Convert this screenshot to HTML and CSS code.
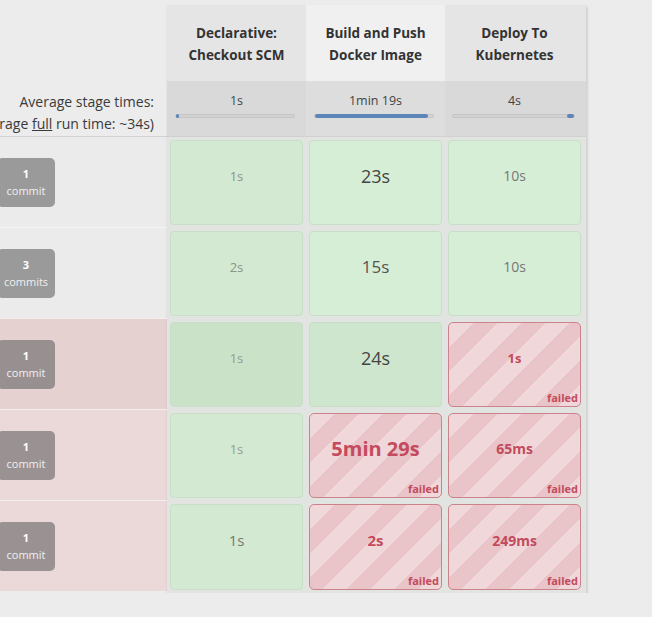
FILE: index.html
```html
<!DOCTYPE html>
<html>
<head>
<meta charset="utf-8">
<link rel="stylesheet" href="styles.css">
</head>
<body>
<div class="view">
  <div class="left">
    <div class="l-head"></div>
    <div class="l-avg">
      <div>Average stage times:</div>
      <div>(Average <u>full</u> run time: ~34s)</div>
    </div>
    <div class="l-row first"><div class="badge"><b>1</b><span>commit</span></div></div>
    <div class="l-row"><div class="badge"><b>3</b><span>commits</span></div></div>
    <div class="l-row fail hover"><div class="badge"><b>1</b><span>commit</span></div></div>
    <div class="l-row fail"><div class="badge"><b>1</b><span>commit</span></div></div>
    <div class="l-row fail"><div class="badge"><b>1</b><span>commit</span></div></div>
  </div>
  <div class="stages">
    <div class="s-row head">
      <div class="hcell">Declarative:<br>Checkout SCM</div>
      <div class="hcell lit">Build and Push<br>Docker Image</div>
      <div class="hcell">Deploy To<br>Kubernetes</div>
    </div>
    <div class="s-row avg">
      <div class="acell"><div class="atime">1s</div><div class="track"><div class="fill f1"></div></div></div>
      <div class="acell lit"><div class="atime">1min 19s</div><div class="track"><div class="fill f2"></div></div></div>
      <div class="acell"><div class="atime">4s</div><div class="track end"><div class="fill f3"></div></div></div>
    </div>
    <div class="s-row data first">
      <div class="col"><div class="cell ok"><span class="t13 c8">1s</span></div></div>
      <div class="col"><div class="cell ok lt"><span class="t18 c4">23s</span></div></div>
      <div class="col"><div class="cell ok lt"><span class="t14 c7">10s</span></div></div>
    </div>
    <div class="s-row data">
      <div class="col"><div class="cell ok"><span class="t13 c8">2s</span></div></div>
      <div class="col"><div class="cell ok lt"><span class="t16 c5">15s</span></div></div>
      <div class="col"><div class="cell ok lt"><span class="t14 c7">10s</span></div></div>
    </div>
    <div class="s-row data">
      <div class="col"><div class="cell ok dk"><span class="t13 c9">1s</span></div></div>
      <div class="col"><div class="cell ok md"><span class="t18 c4">24s</span></div></div>
      <div class="col"><div class="cell bad"><span class="t13">1s</span><i>failed</i></div></div>
    </div>
    <div class="s-row data">
      <div class="col"><div class="cell ok"><span class="t13 c9">1s</span></div></div>
      <div class="col"><div class="cell bad"><span class="t20">5min 29s</span><i>failed</i></div></div>
      <div class="col"><div class="cell bad"><span class="t14">65ms</span><i>failed</i></div></div>
    </div>
    <div class="s-row data last">
      <div class="col"><div class="cell ok"><span class="t15 c7">1s</span></div></div>
      <div class="col"><div class="cell bad"><span class="t15">2s</span><i>failed</i></div></div>
      <div class="col"><div class="cell bad"><span class="t14">249ms</span><i>failed</i></div></div>
    </div>
  </div>
</div>
</body>
</html>
```

FILE: styles.css
```css
html, body {
  margin: 0;
  padding: 0;
  background: #ececec;
  font-family: "Open Sans", "Noto Sans", sans-serif;
  color: #333;
  overflow: hidden;
}
.view {
  display: flex;
  margin-left: -84px;
  padding-top: 5px;
}
.left {
  width: 251px;
  display: flex;
  flex-direction: column;
}
.l-head {
  height: 76px;
}
.l-avg {
  height: 55px;
  box-sizing: border-box;
  padding: 10px 13px 0 0;
  text-align: right;
  font-size: 14px;
  line-height: 22px;
  color: #3a3a3a;
  white-space: nowrap;
}
.l-row {
  height: 91px;
  box-sizing: border-box;
  border-top: 1px solid #f6f6f6;
  background: #ebebeb;
  display: flex;
  align-items: center;
}
.l-row.first {
  border-top-color: #d2d2d2;
}
.l-row.fail {
  background: #ebd8d8;
  border-top-color: #f4eded;
}
.l-row.hover {
  background: #e6d1d1;
}
.badge {
  margin-left: 81px;
  width: 58px;
  height: 49px;
  border-radius: 5px;
  background: rgba(100, 100, 100, 0.6);
  color: #fff;
  display: flex;
  flex-direction: column;
  align-items: center;
  justify-content: center;
  font-size: 11px;
  line-height: 17px;
}
.badge b {
  font-weight: 700;
}
.badge span {
  color: #f0f0f0;
}
.stages {
  display: flex;
  flex-direction: column;
  background: #e1e4e0;
  box-shadow: 1px 2px 3px rgba(0, 0, 0, 0.18);
}
.s-row {
  display: flex;
}
.s-row > div {
  width: 139px;
  box-sizing: border-box;
}
.s-row > div:last-child {
  width: 141px;
  padding-right: 2px;
}
.head .hcell {
  height: 76px;
  background: #e5e5e5;
  display: flex;
  align-items: center;
  justify-content: center;
  text-align: center;
  font-weight: 700;
  font-size: 13.5px;
  line-height: 22px;
  color: #333;
  padding-top: 2px;
}
.head .hcell.lit {
  background: #f0f0f0;
}
.avg .acell {
  height: 55px;
  background: #d9d9d9;
  padding: 11px 0 0 8px;
}
.avg .acell.lit {
  background: #dddddd;
}
.atime {
  text-align: center;
  font-size: 12.5px;
  line-height: 18px;
  color: #444;
  padding-right: 8px;
}
.track {
  margin-top: 4px;
  width: 120px;
  height: 4px;
  box-sizing: border-box;
  background: #d2d2d2;
  border: 1px solid #c6c6c6;
  border-radius: 2px;
  display: flex;
}
.track.end {
  justify-content: flex-end;
  margin-left: -1px;
  width: 123px;
}
.fill {
  height: 4px;
  margin-top: -1px;
  background: #5d86b8;
  border-radius: 2px;
}
.f1 { width: 3px; }
.f2 { width: 113px; }
.f3 { width: 7px; }
.data .col {
  height: 91px;
  padding: 3px 3px 2px 3px;
}
.data .col:last-child {
  padding-right: 5px;
}
.data.first .col {
  border-top: 1px solid #d0d0d0;
}
.data:not(.first) .col {
  padding-top: 4px;
  padding-bottom: 1px;
}
.data.last .col {
  height: 93px;
  padding-bottom: 3px;
}
.cell {
  position: relative;
  height: 85px;
  box-sizing: border-box;
  border-radius: 4px;
  display: flex;
  align-items: center;
  justify-content: center;
  padding-bottom: 14px;
}
.data.last .cell {
  height: 86px;
}
.cell.ok {
  background: #d3e9d2;
  border: 1px solid #c9dec8;
}
.cell.ok.lt {
  background: #d7eed6;
}
.cell.ok.md {
  background: #cfe6ce;
}
.cell.ok.dk {
  background: #c9e2c8;
}
.cell.bad {
  border: 1px solid #cc828b;
  border-radius: 5px;
  background: repeating-linear-gradient(135deg, #f0d8da 0, #f0d8da 17px, #e9c4c9 17px, #e9c4c9 34px);
  color: #c44a5d;
  font-weight: 700;
}
.cell.bad i {
  position: absolute;
  right: 2px;
  bottom: 1px;
  font-style: normal;
  font-size: 11px;
  line-height: 14px;
  font-weight: 700;
  color: #c44a5d;
}
.t13 { font-size: 13px; }
.t14 { font-size: 14px; }
.t15 { font-size: 15px; }
.t16 { font-size: 17px; }
.t18 { font-size: 18px; }
.t20 { font-size: 20px; }
.c4 { color: #444; }
.c5 { color: #555; }
.c7 { color: #777; }
.c8 { color: #8a948a; }
.c9 { color: #939c93; }
```
